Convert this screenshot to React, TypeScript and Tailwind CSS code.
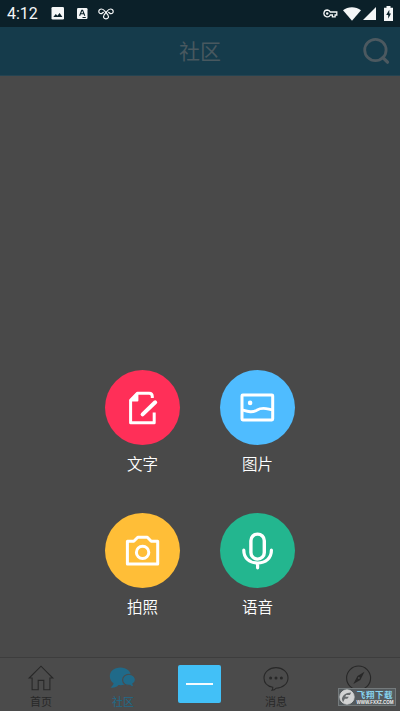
import React from "react";

type IconProps = { children: React.ReactNode; className?: string; box: string };

function Icon({ children, className = "", box }: IconProps) {
  return (
    <svg viewBox={box} fill="none" stroke="currentColor" className={`block shrink-0 ${className}`}>
      {children}
    </svg>
  );
}

function StatusBar() {
  return (
    <div className="flex h-[27px] items-center bg-[#0b2029] px-[7px] text-[#f4f6f7]">
      <span className="w-[44px] font-['Roboto',sans-serif] text-[16px] leading-[27px]">4:12</span>
      <Icon box="0 0 14 13" className="h-[13px] w-[14px]">
        <rect x="0.5" y="0" width="12.5" height="12.5" rx="1.3" fill="currentColor" stroke="none" />
        <path d="M2.3 10 4.8 6.9 6.4 8.8 8.6 5.9 11.4 10Z" fill="#0b2029" stroke="none" />
      </Icon>
      <Icon box="0 0 12 13" className="ml-[12px] h-[13px] w-[12px]">
        <rect x="0" y="1" width="10.5" height="11" rx="1.2" fill="currentColor" stroke="none" />
        <path d="M2.6 8.7 4.8 3.2h.8l2.2 5.5M3.5 6.8h3.4M5.5 10.5h3.3" stroke="#0b2029" strokeWidth="1.1" />
      </Icon>
      <Icon box="0 0 16 12" className="ml-[9px] h-[12px] w-[16px]">
        <path
          d="M5.4 4.3 3.7 5.6C1.7 6 .7 4.6.8 3.2 1 1.6 2.2 1 3.5 1c2.2 0 3 1.6 4.5 3.4l2 2.8c1.2 1.9.1 3.7-2 3.7s-3.2-1.8-2-3.7l2-2.8C9.500 2.600 10.300 1 12.500 1c1.300 0 2.500.600 2.700 2.200.100 1.400-.900 2.800-2.900 2.400l-1.700-1.300"
          strokeWidth="1.2"
          strokeLinecap="round"
        />
      </Icon>
      <div className="flex-1" />
      <Icon box="0 0 15 9" className="h-[9px] w-[15px]">
        <path
          d="M4.3 1a3.4 3.4 0 1 0 3 5h2.1v1.900h2.700V6h1.700V3H7.300a3.400 3.400 0 0 0-3-2Z"
          strokeWidth="1.3"
        />
        <circle cx="4.2" cy="4.5" r="1.2" fill="currentColor" stroke="none" />
      </Icon>
      <Icon box="0 0 18 14" className="ml-[5px] h-[14px] w-[18px]">
        <path d="M0 3.2C5-.8 12.8-.8 18 3.2L9 13.8Z" fill="currentColor" stroke="none" />
      </Icon>
      <Icon box="0 0 13 13" className="ml-[2px] h-[13px] w-[13px]">
        <path d="M0 13 13 0V13Z" fill="currentColor" stroke="none" />
      </Icon>
      <Icon box="0 0 9 15" className="ml-[8px] h-[15px] w-[9px]">
        <path d="M0 1.8h2.5V0h4v1.8H9V15H0Z" fill="currentColor" stroke="none" />
        <path d="M5.3 3.8 2.2 9h2v3.8L7 7.5H5.3Z" fill="#0b2029" stroke="none" />
      </Icon>
    </div>
  );
}

function Header() {
  return (
    <header className="grid h-[49px] grid-cols-[50px_1fr_50px] items-center border-b border-[#244452] bg-[#153b4b]">
      <span />
      <h1 className="pb-[2px] text-center text-[21px] leading-[30px] text-[#48585f]">社区</h1>
      <Icon box="0 0 28 28" className="ml-[12px] h-[28px] w-[28px] text-[#4c5960]">
        <circle cx="13.4" cy="13" r="10.7" strokeWidth="2.8" />
        <path d="m20.9 20.6 4.6 4.6" strokeWidth="3.3" strokeLinecap="round" />
      </Icon>
    </header>
  );
}

function Action({ color, label, children }: { color: string; label: string; children: React.ReactNode }) {
  return (
    <button className="flex w-[75px] flex-col items-center text-white">
      <span className={`flex size-[75px] items-center justify-center rounded-full ${color}`}>
        <Icon box="0 0 38 38" className="size-[38px]">
          {children}
        </Icon>
      </span>
      <span className="mb-[1px] mt-[7px] text-[15.5px] font-[350] leading-[22px]">{label}</span>
    </button>
  );
}

function Actions() {
  return (
    <div className="ml-[105px] mt-[294px] grid w-[190px] grid-cols-[75px_75px] gap-x-[40px] gap-y-[38px]">
      <Action color="bg-[#ff2f58]" label="文字">
        <path
          d="M28.3 9V7.4Q28.3 4.2 25.2 4.2H13.4L6.6 11.4V33.8H30.2V23.5"
          strokeWidth="3"
          strokeLinejoin="round"
        />
        <path d="M6.6 11.4 13.4 4.2V11.4Z" fill="currentColor" strokeWidth="2" strokeLinejoin="round" />
        <path d="M18.6 25.4 31.2 13.3" strokeWidth="4" strokeLinecap="round" />
      </Action>
      <Action color="bg-[#4fbcff]" label="图片">
        <rect x="3" y="5.9" width="30.7" height="25" rx="0.8" strokeWidth="3" />
        <circle cx="11.1" cy="13.9" r="2.3" fill="currentColor" stroke="none" />
        <path d="M3.5 21C9 22.6 13.4 24 18.2 21 23.7 17.6 29.2 20.4 33.5 20.7" strokeWidth="2.8" />
      </Action>
      <Action color="bg-[#ffbe37]" label="拍照">
        <path d="M3.4 9.2H9.8L13.8 5.3H23.3L27.2 9.2H33.7V32H3.4Z" strokeWidth="3" strokeLinejoin="round" />
        <circle cx="18.6" cy="20.4" r="6.2" strokeWidth="3" />
      </Action>
      <Action color="bg-[#23b68f]" label="语音">
        <rect x="11.9" y="2.1" width="13.4" height="25" rx="6.7" strokeWidth="3.4" />
        <path d="M4.8 18.2C4.8 26.2 10.6 31 18.6 31s13.8-4.8 13.8-12.8M18.6 31v4.8" strokeWidth="3.2" strokeLinecap="round" />
      </Action>
    </div>
  );
}

function NavItem({ label, color, children }: { label?: string; color: string; children: React.ReactNode }) {
  return (
    <div className={`flex flex-col items-center pt-[6px] ${color}`}>
      <Icon box="0 0 28 28" className="size-[28px]">
        {children}
      </Icon>
      {label && <span className="mt-[1px] text-[11px] leading-[16px]">{label}</span>}
    </div>
  );
}

function Watermark() {
  return (
    <div className="absolute bottom-[5px] right-[4px] flex h-[18px] w-[58px] items-center bg-[#555b5e] ring-1 ring-inset ring-[#747a7c]">
      <Icon box="0 0 17 17" className="ml-[1px] size-[16px]">
        <circle cx="8.5" cy="8.5" r="7.6" fill="#d2d3d3" stroke="#d2d3d3" />
        <path d="M3 10.5C4.5 6 7 4.2 13 3.8L11.6 6.4H7.5L6.7 8.3H10.5L8.8 10.3H6.2L4.3 14" fill="#676b6d" stroke="none" />
      </Icon>
      <div className="flex w-[40px] flex-col items-center">
        <span className="whitespace-nowrap text-[8.5px] font-bold leading-[12px] tracking-[0.6px] text-[#87d3ef]">
          飞翔下载
        </span>
        <span className="whitespace-nowrap font-['Liberation_Sans',sans-serif] text-[4.5px] font-bold leading-[6px] text-[#eeeeee]">
          WWW.FXXZ.COM
        </span>
      </div>
    </div>
  );
}

function BottomNav() {
  return (
    <nav className="relative grid h-[54px] grid-cols-[82px_82px_71px_82px_83px] border-t border-[#3d3d3d] bg-[#4b4b4b]">
      <NavItem label="首页" color="text-[#282828]">
        <path d="M2.2 14 14 2.2 25.8 14H22.9V25.8H16.8V16.4H11.2V25.8H5.1V14Z" strokeWidth="1.1" />
      </NavItem>
      <NavItem label="社区" color="text-[#206a89]">
        <g transform="translate(-0.8 0)">
          <path
            d="M12.2 3.4C5.9 3.4 1.6 7.3 1.6 12.2c0 2.9 1.4 5.4 3.8 7-.6 2.1-1.7 3.2-3.3 4.4 3.8.4 6.4-.5 8.2-2.6 6.900 1 12.500-3 12.500-8.800 0-4.900-4.500-8.800-10.600-8.800Z"
            fill="currentColor"
            stroke="none"
          />
          <path
            d="M20.8 10.3c-3.5 0-6.4 2.5-6.4 5.6 0 3.5 3.3 6 7.2 5.4 1.3 1.2 2.8 1.6 4.8 1.2-1.2-.8-1.8-1.6-1.7-2.8 1.7-1 2.5-2.3 2.5-3.8 0-3.1-2.9-5.6-6.4-5.6Z"
            fill="currentColor"
            stroke="#4b4b4b"
            strokeWidth="1.1"
          />
        </g>
      </NavItem>
      <div className="ml-[14px] mt-[7px] flex h-[38px] w-[43px] items-center justify-center rounded-[2px] bg-[#42c0f7]">
        <span className="h-[2px] w-[27px] bg-[#f4fbff]" />
      </div>
      <NavItem label="消息" color="text-[#282828]">
        <path
          d="M10.8 23.3C5.4 22.1 2 18.6 2 13.9 2 8.2 7.3 3.6 14 3.6s12 4.6 12 10.3-5.3 10.3-12 10.3c-1 1.4-2.2 2-4 2.1.7-1 .9-1.7.8-3Z"
          strokeWidth="1.1"
        />
        <circle cx="8.6" cy="14.1" r="1.5" fill="currentColor" stroke="none" />
        <circle cx="14" cy="14.1" r="1.5" fill="currentColor" stroke="none" />
        <circle cx="19.4" cy="14.1" r="1.5" fill="currentColor" stroke="none" />
      </NavItem>
      <NavItem color="text-[#282828]">
        <circle cx="13.6" cy="14" r="12" strokeWidth="1.1" />
        <path d="m19.5 7.8-4.2 8.3-7 4 4.2-8.2Z" fill="currentColor" stroke="none" />
        <circle cx="13.9" cy="14" r="1" fill="#4b4b4b" stroke="none" />
      </NavItem>
      <Watermark />
    </nav>
  );
}

export default function App() {
  return (
    <div className="flex h-[711px] w-[400px] flex-col overflow-hidden bg-[#494949] font-['Noto_Sans_CJK_SC',sans-serif]">
      <StatusBar />
      <Header />
      <main className="flex-1">
        <Actions />
      </main>
      <BottomNav />
    </div>
  );
}
